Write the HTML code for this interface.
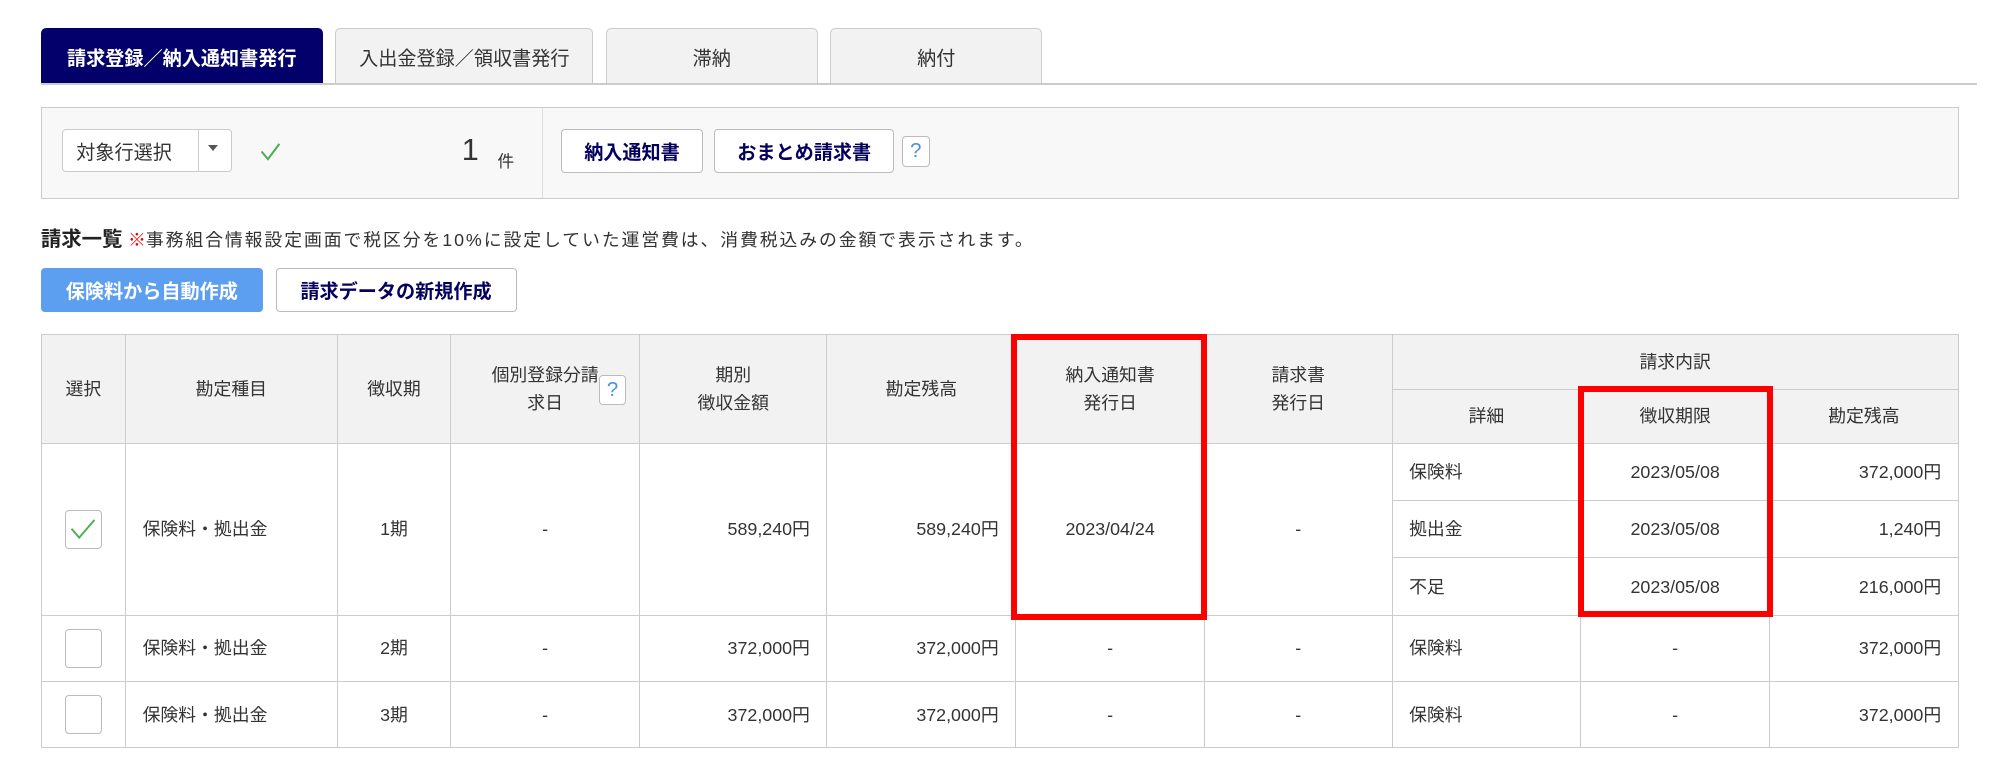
<!DOCTYPE html>
<html><head><meta charset="utf-8"><style>
html,body{margin:0;padding:0;background:#fff;width:2000px;height:783px;overflow:hidden}
#w{zoom:1.27551;width:1568px;height:614px;position:relative;font-family:"Liberation Sans","Noto Sans CJK JP",sans-serif;color:#333;font-size:14px}
.a{position:absolute;box-sizing:border-box}
.tab{top:22px;height:44px;border:1px solid #ccc;border-bottom:none;background:#f2f2f2;border-radius:4px 4px 0 0;display:flex;align-items:center;justify-content:center;font-size:15px;color:#333}
.btn{border:1px solid #bbb;border-radius:3px;background:#fff;display:flex;align-items:center;justify-content:center;font-weight:bold;color:#04005e;font-size:15px}
.q{border:1px solid #bbb;border-radius:3px;background:#fff;color:#4a8fe0;font-size:16px;display:flex;align-items:center;justify-content:center}
table{position:absolute;left:32px;top:262px;border-collapse:collapse;table-layout:fixed;width:1503px}
td,th{border:1px solid #ccc;font-size:14px;font-weight:normal;color:#333;text-align:center;padding:0;line-height:22px}
th{background:#f2f2f2}
.r{text-align:right;padding-right:13px}.l{text-align:left;padding-left:13px}
.cb{display:inline-block;width:28px;height:29px;border:1px solid #bbb;border-radius:3px;vertical-align:middle;background:#fff;position:relative}
.red{position:absolute;border:5px solid #f00;box-sizing:border-box}
</style></head><body><div id="w">
<div class="a tab" style="left:32px;width:221px;background:#04006b;color:#fff;font-weight:bold;border-color:#04006b">請求登録／納入通知書発行</div>
<div class="a tab" style="left:263px;width:202px">入出金登録／領収書発行</div>
<div class="a tab" style="left:475px;width:166px">滞納</div>
<div class="a tab" style="left:651px;width:166px">納付</div>
<div class="a" style="left:32px;top:65px;width:1518px;height:2px;background:#ccc"></div>

<div class="a" style="left:32px;top:84px;width:1504px;height:72px;border:1px solid #ccc;background:#f8f8f8"></div>
<div class="a" style="left:425px;top:85px;width:1px;height:70px;background:#ddd"></div>
<div class="a" style="left:49px;top:101px;width:133px;height:34px;border:1px solid #ccc;border-radius:3px;background:#fff;font-size:15px;padding:6px 0 0 10px">対象行選択</div>
<div class="a" style="left:155px;top:102px;width:1px;height:32px;background:#ccc"></div>
<div class="a" style="left:163px;top:114px;width:0;height:0;border-left:4px solid transparent;border-right:4px solid transparent;border-top:5px solid #555"></div>
<svg class="a" style="left:203px;top:110px" width="18" height="18" viewBox="0 0 18 18"><path d="M2 9 L7 15 L16 3" fill="none" stroke="#4caf50" stroke-width="1.6"/></svg>
<div class="a" style="left:362px;top:104px;font-size:24px">1</div>
<div class="a" style="left:390px;top:116px;font-size:13px">件</div>
<div class="a btn" style="left:440px;top:101px;width:111px;height:35px">納入通知書</div>
<div class="a btn" style="left:560px;top:101px;width:141px;height:35px">おまとめ請求書</div>
<div class="a q" style="left:707px;top:107px;width:22px;height:24px">?</div>

<div class="a" style="left:32px;top:174px;font-size:16px;font-weight:bold;color:#222;white-space:nowrap">請求一覧 <span style="color:#e00;font-size:14px;font-weight:bold">※</span><span style="font-size:14px;font-weight:normal;color:#333;letter-spacing:1.5px">事務組合情報設定画面で税区分を10%に設定していた運営費は、消費税込みの金額で表示されます。</span></div>
<div class="a btn" style="left:32px;top:210px;width:174px;height:35px;background:#5c9ff0;border-color:#5c9ff0;color:#fff">保険料から自動作成</div>
<div class="a btn" style="left:216px;top:210px;width:189px;height:35px">請求データの新規作成</div>

<table>
<colgroup><col style="width:66px"><col style="width:166px"><col style="width:89px"><col style="width:148px"><col style="width:147px"><col style="width:148px"><col style="width:148px"><col style="width:147px"><col style="width:148px"><col style="width:148px"><col style="width:148px"></colgroup>
<tr style="height:43px"><th rowspan="2">選択</th><th rowspan="2">勘定種目</th><th rowspan="2">徴収期</th><th rowspan="2"><div style="position:relative">個別登録分請<br>求日<span class="q" style="position:absolute;right:10px;top:11px;width:20px;height:22px;display:flex">?</span></div></th><th rowspan="2">期別<br>徴収金額</th><th rowspan="2">勘定残高</th><th rowspan="2">納入通知書<br>発行日</th><th rowspan="2">請求書<br>発行日</th><th colspan="3">請求内訳</th></tr>
<tr style="height:42px"><th>詳細</th><th>徴収期限</th><th>勘定残高</th></tr>
<tr style="height:45px"><td rowspan="3"><span class="cb"><svg style="position:absolute;left:3px;top:4px" width="22" height="20" viewBox="0 0 22 20"><path d="M2 10 L8 17 L20 3" fill="none" stroke="#4caf50" stroke-width="1.5"/></svg></span></td><td rowspan="3" class="l">保険料・拠出金</td><td rowspan="3">1期</td><td rowspan="3">-</td><td rowspan="3" class="r">589,240円</td><td rowspan="3" class="r">589,240円</td><td rowspan="3">2023/04/24</td><td rowspan="3">-</td><td class="l">保険料</td><td>2023/05/08</td><td class="r">372,000円</td></tr>
<tr style="height:45px"><td class="l">拠出金</td><td>2023/05/08</td><td class="r">1,240円</td></tr>
<tr style="height:45px"><td class="l">不足</td><td>2023/05/08</td><td class="r">216,000円</td></tr>
<tr style="height:52px"><td><span class="cb"></span></td><td class="l">保険料・拠出金</td><td>2期</td><td>-</td><td class="r">372,000円</td><td class="r">372,000円</td><td>-</td><td>-</td><td class="l">保険料</td><td>-</td><td class="r">372,000円</td></tr>
<tr style="height:52px"><td><span class="cb"></span></td><td class="l">保険料・拠出金</td><td>3期</td><td>-</td><td class="r">372,000円</td><td class="r">372,000円</td><td>-</td><td>-</td><td class="l">保険料</td><td>-</td><td class="r">372,000円</td></tr>
</table>
<div class="red" style="left:793px;top:262px;width:153px;height:224px"></div>
<div class="red" style="left:1237px;top:303px;width:153px;height:181px"></div>
</div></body></html>
